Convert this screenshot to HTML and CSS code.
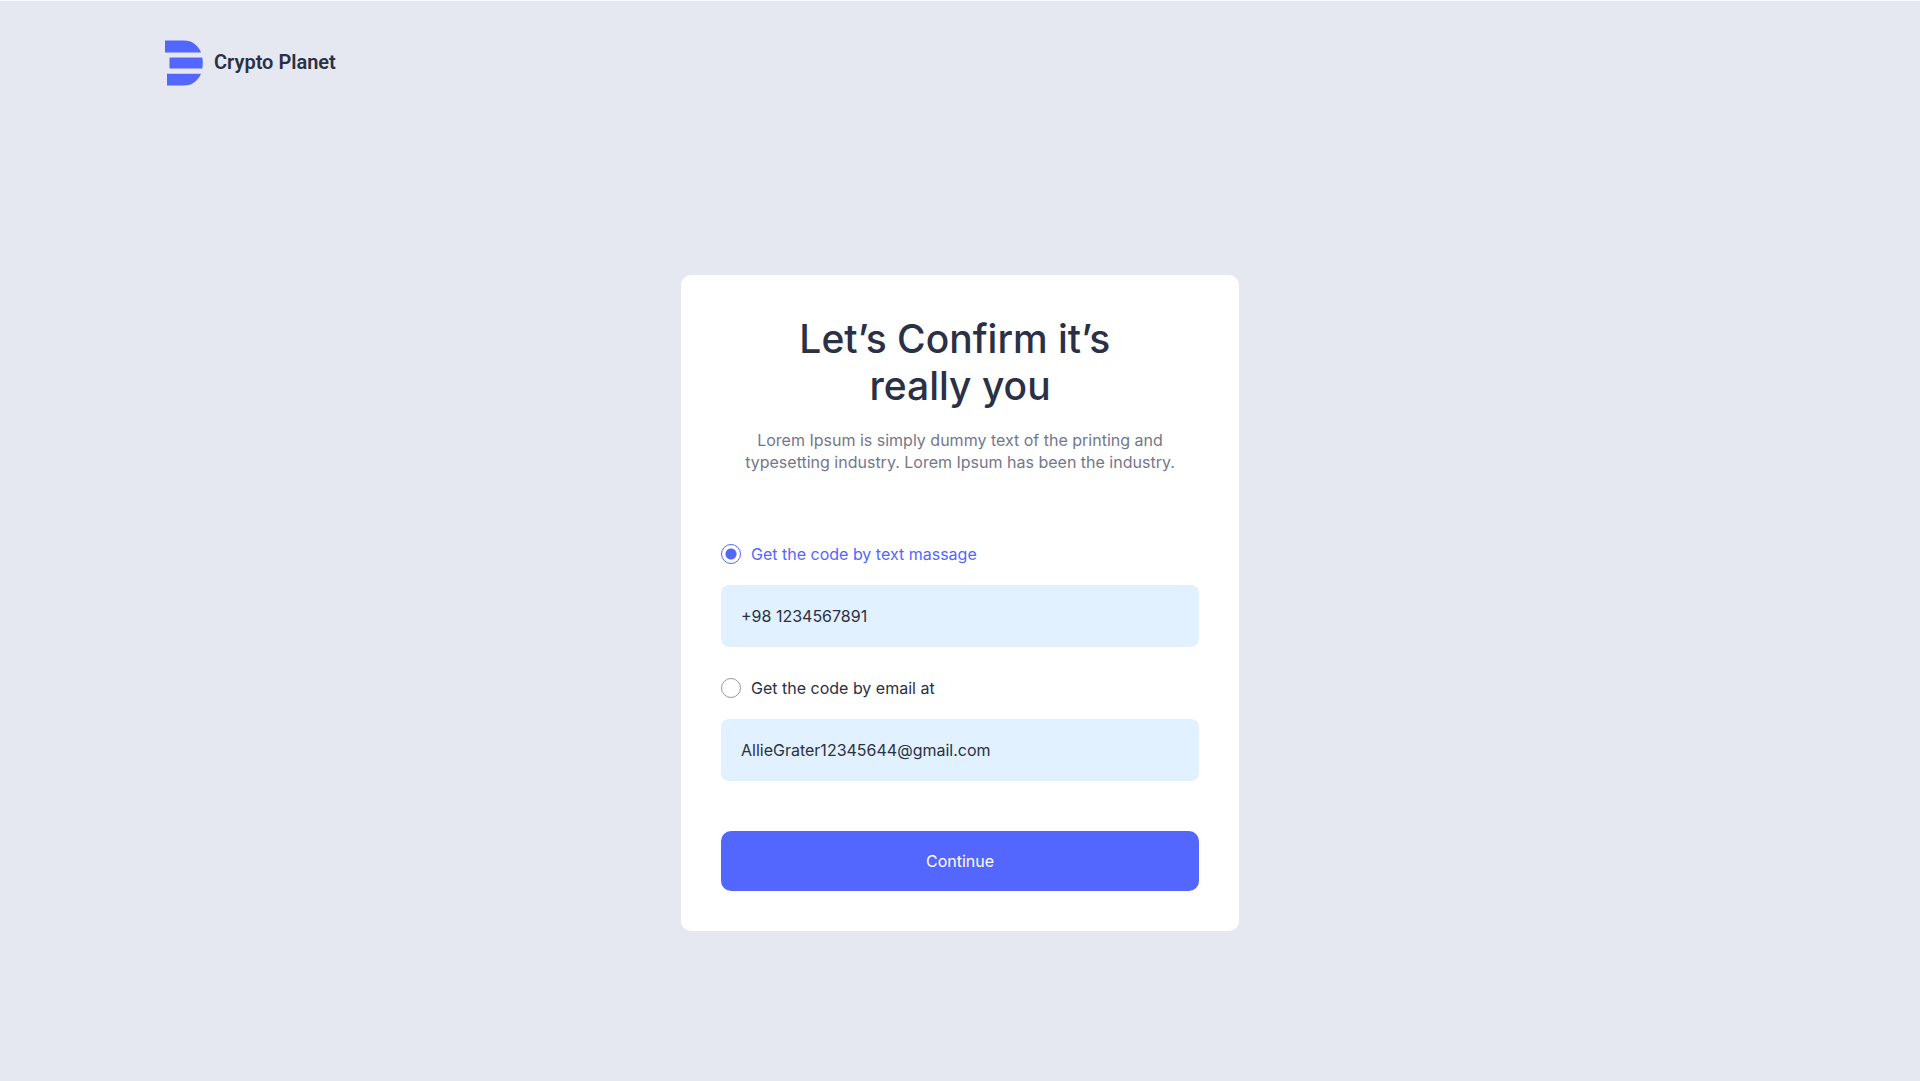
FILE: index.html
```html
<!DOCTYPE html>
<html lang="en">
<head>
  <meta charset="utf-8">
  <meta name="viewport" content="width=device-width, initial-scale=1">
  <title>Crypto Planet</title>
  <link rel="stylesheet" href="styles.css">
</head>
<body>
  <header class="site-header">
    <a class="brand" href="#">
      <svg class="brand-mark" viewBox="0 0 38 46" aria-hidden="true">
        <path d="M0 .5H19C27 .5 33 5 36 12.500H0Z"/>
        <path d="M4.500 17.500H37.300Q38.300 23 37.300 28.500H4.500Z"/>
        <path d="M2 33.800H36C33 41 27 45.500 19 45.500H2Z"/>
      </svg>
      <span class="brand-name">Crypto Planet</span>
    </a>
  </header>
  <main class="page">
    <form class="card">
      <h1 class="title">Let’s Confirm it’s&nbsp;<br>really you</h1>
      <p class="intro">Lorem Ipsum is simply dummy text of the printing and typesetting industry. Lorem Ipsum has been the industry.</p>
      <div class="options">
        <div class="option">
          <label class="choice"><input class="radio" type="radio" name="method" value="sms" checked><span class="choice-text">Get the code by text massage</span></label>
          <input class="field" type="tel" aria-label="Phone number" value="+98 1234567891">
        </div>
        <div class="option">
          <label class="choice"><input class="radio" type="radio" name="method" value="email"><span class="choice-text">Get the code by email at</span></label>
          <input class="field" type="email" aria-label="Email address" value="AllieGrater12345644@gmail.com">
        </div>
      </div>
      <button class="submit" type="submit">Continue</button>
    </form>
  </main>
</body>
</html>
```

FILE: styles.css
```css
* {
  box-sizing: border-box;
}

body {
  margin: 0;
  min-height: 100vh;
  display: flex;
  flex-direction: column;
  border-top: 1px solid #f6f9fd;
  background: #e5e8f1;
  color: #2a3045;
  font-family: Inter, "Liberation Sans", sans-serif;
  font-size: 16px;
  line-height: 22px;
}

.site-header {
  display: flex;
  padding: 39px 165px 0;
}

.brand {
  display: flex;
  align-items: center;
  gap: 11px;
  color: inherit;
  text-decoration: none;
}

.brand-mark {
  width: 38px;
  height: 46px;
  fill: #5367ff;
}

.brand-name {
  padding-bottom: 2px;
  font-family: Roboto, Inter, sans-serif;
  font-size: 20px;
  font-weight: 600;
  line-height: 24px;
}

.page {
  flex: 1;
  display: flex;
  justify-content: center;
  align-items: flex-start;
  padding: 189px 20px 40px;
}

.card {
  width: 100%;
  max-width: 558px;
  padding: 40px;
  border-radius: 10px;
  background: #fff;
}

.title {
  margin: 0;
  font-size: 39px;
  font-weight: 450;
  line-height: 47px;
  text-align: center;
}

.intro {
  margin: 20px 20px 71px;
  color: #74778b;
  text-align: center;
}

.options {
  display: grid;
  gap: 31px;
}

.option {
  display: grid;
  gap: 21px;
}

.choice {
  display: flex;
  align-items: center;
  gap: 10px;
  line-height: 20px;
  cursor: pointer;
}

.radio {
  appearance: none;
  width: 20px;
  height: 20px;
  margin: 0;
  border: 1px solid #9698aa;
  border-radius: 50%;
  background: #fff;
}

.radio:checked {
  border-color: #5367ff;
  background: radial-gradient(circle, #5367ff 5px, #fff 6px);
}

.radio:checked + .choice-text {
  color: #5367ff;
}

.field {
  width: 100%;
  height: 62px;
  padding: 0 20px;
  border: 0;
  border-radius: 8px;
  background: #e1f1ff;
  color: inherit;
  font: inherit;
}

.submit {
  width: 100%;
  height: 60px;
  margin-top: 50px;
  border: 0;
  border-radius: 10px;
  background: #5367ff;
  color: #fff;
  font: inherit;
  cursor: pointer;
}
```
